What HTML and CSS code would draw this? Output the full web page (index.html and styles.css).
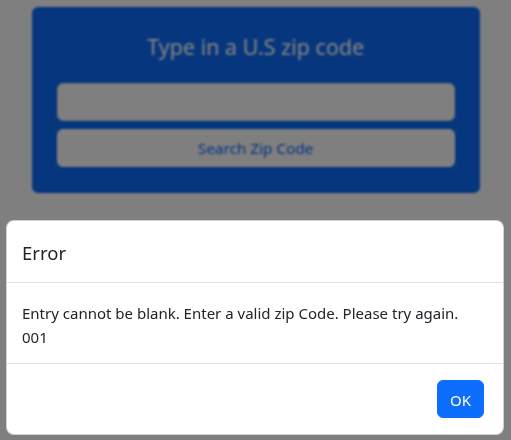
FILE: index.html
```html
<!DOCTYPE html>
<html lang="en">
<head>
<meta charset="utf-8">
<title>Zip Code Search</title>
<link rel="stylesheet" href="styles.css">
</head>
<body>
<main class="page">
  <section class="search-card">
    <h4 class="search-title">Type in a U.S zip code</h4>
    <input class="zip-input" type="text" aria-label="Zip code">
    <button class="search-btn" type="button">Search Zip Code</button>
  </section>
</main>
<div class="backdrop"></div>
<div class="modal" role="dialog" aria-modal="true">
  <div class="modal-header">
    <h5 class="modal-title">Error</h5>
  </div>
  <div class="modal-body">
    <p>Entry cannot be blank. Enter a valid zip Code. Please try again.</p>
    <p>001</p>
  </div>
  <div class="modal-footer">
    <button class="ok-btn" type="button">OK</button>
  </div>
</div>
</body>
</html>
```

FILE: styles.css
```css
* { box-sizing: border-box; }
html, body { margin: 0; }
body {
  font-family: "Noto Sans", "Open Sans", Arial, sans-serif;
  font-size: 15px;
  line-height: 24px;
  color: #212529;
  background: #fff;
}
.page {
  padding-top: 7px;
}
.search-card {
  width: 448px;
  margin: 0 auto;
  background: #0d6efd;
  border-radius: 6px;
  padding: 25px 25px 26px;
  display: flex;
  flex-direction: column;
  gap: 8px;
}
.search-title {
  margin: 0 0 17px;
  padding: 2px 0 0;
  height: 26px;
  font-size: 21.5px;
  font-weight: 400;
  line-height: 26px;
  color: #fff;
  text-align: center;
}
.zip-input {
  height: 38px;
  border: 1px solid #dee2e6;
  border-radius: 6px;
  background: #fff;
  font: inherit;
}
.search-btn {
  height: 38px;
  border: 1px solid #fff;
  border-radius: 6px;
  background: #fff;
  color: #0d6efd;
  font: inherit;
  font-size: 15.3px;
}
.backdrop {
  position: fixed;
  inset: 0;
  background: rgba(0, 0, 0, 0.5);
  backdrop-filter: blur(1px);
}
.modal {
  position: fixed;
  top: 220px;
  left: 6px;
  width: 498px;
  background: #fff;
  border: 1px solid rgba(0, 0, 0, 0.175);
  border-radius: 8px;
  overflow: hidden;
}
.modal-header {
  padding: 17px 15px 14px;
  border-bottom: 1px solid #dee2e6;
}
.modal-title {
  margin: 0;
  font-size: 18.5px;
  font-weight: 400;
  line-height: 30px;
}
.modal-body {
  padding: 18px 15px 14px;
}
.modal-body p { margin: 0; }
.modal-footer {
  display: flex;
  justify-content: flex-end;
  padding: 12px 15px;
  border-top: 1px solid #dee2e6;
}
.ok-btn {
  margin: 4px;
  height: 38px;
  padding: 7px 12px 5px;
  border: 1px solid #0d6efd;
  border-radius: 6px;
  background: #0d6efd;
  color: #fff;
  font: inherit;
}
```
